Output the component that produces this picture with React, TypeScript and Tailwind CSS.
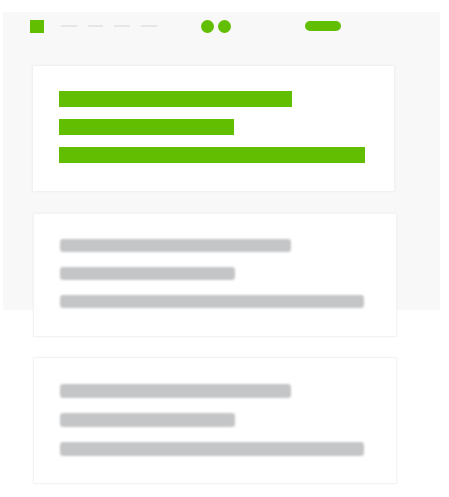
import React from "react";

export default function App() {
  return (
    <div className="w-[449px] h-[497px] bg-white overflow-hidden font-['Liberation_Sans',sans-serif]">
      <div className="ml-[3px] mt-[12px] pt-[7px] w-[437px] bg-[linear-gradient(to_bottom,#f8f8f8_298px,transparent_298px)] pb-[13px]">
        {/* header */}
        <div className="flex items-center h-[14px] pl-[27px]">
          <div className="w-[14px] h-[13px] bg-[#62be00]" />
          <div className="flex items-center gap-[11px] ml-[17px]">
            <div className="w-[16px] h-[2px] bg-[#e6e6e6] blur-[0.5px]" />
            <div className="w-[15px] h-[2px] bg-[#e6e6e6] blur-[0.5px]" />
            <div className="w-[16px] h-[2px] bg-[#e6e6e6] blur-[0.5px]" />
            <div className="w-[16px] h-[2px] bg-[#e6e6e6] blur-[0.5px]" />
          </div>
          <div className="flex items-center gap-[4px] ml-[44px]">
            <div className="w-[13px] h-[13px] rounded-full bg-[#62be00]" />
            <div className="w-[13px] h-[13px] rounded-full bg-[#62be00]" />
          </div>
          <div className="ml-[74px] w-[36px] h-[10px] rounded-full bg-[#62be00]" />
        </div>

        {/* card 1 */}
        <div className="ml-[29px] mt-[32px] w-[363px] h-[127px] bg-white border border-[#f1f1f1] shadow-[0_0_3px_rgba(0,0,0,0.03)] pt-[25px] pl-[26px] flex flex-col gap-[12px]">
          <div className="w-[233px] h-[16px] bg-[#62be00]" />
          <div className="w-[175px] h-[16px] bg-[#62be00]" />
          <div className="w-[306px] h-[16px] bg-[#62be00]" />
        </div>

        {/* card 2 */}
        <div className="ml-[30px] mt-[21px] w-[364px] h-[124px] bg-white border border-[#f3f3f3] shadow-[0_0_3px_rgba(0,0,0,0.03)] pt-[25px] pl-[26px] flex flex-col gap-[15px]">
          <div className="w-[231px] h-[13px] rounded-[3px] bg-[#c4c5c7] blur-[0.8px]" />
          <div className="w-[175px] h-[13px] rounded-[3px] bg-[#c4c5c7] blur-[0.8px]" />
          <div className="w-[304px] h-[13px] rounded-[3px] bg-[#c4c5c7] blur-[0.8px]" />
        </div>

        {/* card 3 */}
        <div className="ml-[30px] mt-[20px] w-[364px] h-[127px] bg-white border border-[#f3f3f3] shadow-[0_0_3px_rgba(0,0,0,0.03)] pt-[26px] pl-[26px] flex flex-col gap-[15px]">
          <div className="w-[231px] h-[14px] rounded-[3px] bg-[#c4c5c7] blur-[0.8px]" />
          <div className="w-[175px] h-[14px] rounded-[3px] bg-[#c4c5c7] blur-[0.8px]" />
          <div className="w-[304px] h-[14px] rounded-[3px] bg-[#c4c5c7] blur-[0.8px]" />
        </div>
      </div>
    </div>
  );
}
